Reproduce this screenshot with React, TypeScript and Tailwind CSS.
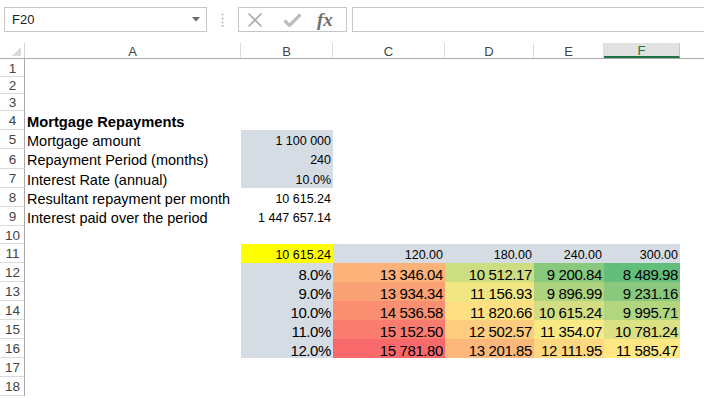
import React from 'react';

const FONT = { fontFamily: '"Liberation Sans", Arial, sans-serif' };

// column widths: A..F, the row header and the rest are separate
const COLS = ['w-[216px]', 'w-[92px]', 'w-[112px]', 'w-[89px]', 'w-[70px]', 'w-[76px]'];
const LETTERS = ['A', 'B', 'C', 'D', 'E', 'F'];

const ROW_H = [
  'h-[18px]', 'h-[17px]', 'h-[17px]', 'h-[19px]', 'h-[19px]', 'h-[20px]',
  'h-[19px]', 'h-[19px]', 'h-[19px]', 'h-[18px]', 'h-[19px]', 'h-[19px]',
  'h-[19px]', 'h-[19px]', 'h-[19px]', 'h-[19px]', 'h-[19px]', 'h-[19px]',
];

const periods = ['120.00', '180.00', '240.00', '300.00'];
const rates = ['8.0%', '9.0%', '10.0%', '11.0%', '12.0%'];
const table: [number, string][][] = [
  [[13346.04, '13 346.04'], [10512.17, '10 512.17'], [9200.84, '9 200.84'], [8489.98, '8 489.98']],
  [[13934.34, '13 934.34'], [11156.93, '11 156.93'], [9896.99, '9 896.99'], [9231.16, '9 231.16']],
  [[14536.58, '14 536.58'], [11820.66, '11 820.66'], [10615.24, '10 615.24'], [9995.71, '9 995.71']],
  [[15152.5, '15 152.50'], [12502.57, '12 502.57'], [11354.07, '11 354.07'], [10781.24, '10 781.24']],
  [[15781.8, '15 781.80'], [13201.85, '13 201.85'], [12111.95, '12 111.95'], [11585.47, '11 585.47']],
];

// 3-colour scale like Excel: green -> yellow -> red
const all = table.flat().map((c) => c[0]).sort((a, b) => a - b);
const lo = all[0];
const hi = all[all.length - 1];
const mid = (all[9] + all[10]) / 2;
const GREEN = [99, 190, 123];
const YELLOW = [255, 235, 132];
const RED = [248, 105, 107];
function scale(v: number) {
  const mix = (a: number[], b: number[], t: number) =>
    a.map((x, i) => Math.round(x + (b[i] - x) * t));
  const c = v <= mid ? mix(GREEN, YELLOW, (v - lo) / (mid - lo)) : mix(YELLOW, RED, (v - mid) / (hi - mid));
  return `rgb(${c[0]},${c[1]},${c[2]})`;
}

type Cell = { text?: string; bold?: boolean; right?: boolean; bg?: string; color?: string; size?: string };

function rowCells(r: number): Cell[] {
  const empty: Cell[] = [{}, {}, {}, {}, {}, {}];
  const blue = 'bg-[#d6dce4]';
  const small = 'text-[12.5px]';
  const big = 'text-[15px] tracking-[-0.4px]';
  switch (r) {
    case 4:
      return [{ text: 'Mortgage Repayments', bold: true }, {}, {}, {}, {}, {}];
    case 5:
      return [{ text: 'Mortgage amount' }, { text: '1 100 000', right: true, bg: blue, size: small }, {}, {}, {}, {}];
    case 6:
      return [{ text: 'Repayment Period (months)' }, { text: '240', right: true, bg: blue, size: small }, {}, {}, {}, {}];
    case 7:
      return [{ text: 'Interest Rate (annual)' }, { text: '10.0%', right: true, bg: blue, size: small }, {}, {}, {}, {}];
    case 8:
      return [{ text: 'Resultant repayment per month' }, { text: '10 615.24', right: true, size: small }, {}, {}, {}, {}];
    case 9:
      return [{ text: 'Interest paid over the period' }, { text: '1 447 657.14', right: true, size: small }, {}, {}, {}, {}];
    case 11:
      return [
        {},
        { text: '10 615.24', right: true, bg: 'bg-[#ffff00]', size: small },
        ...periods.map((p) => ({ text: p, right: true, bg: blue, size: small })),
      ];
    default:
      if (r >= 12 && r <= 16) {
        const i = r - 12;
        return [
          {},
          { text: rates[i], right: true, bg: blue, size: big },
          ...table[i].map(([v, s]) => ({ text: s, right: true, color: scale(v), size: big })),
        ];
      }
      return empty;
  }
}

function TopBar() {
  return (
    <div className="flex h-[43px] items-start pt-[7px] pl-[4px]">
      <div className="flex h-[25px] w-[203px] items-center justify-between border border-[#c6c6c6] pl-[7px] pr-[6px] text-[13px] text-[#222]">
        <span>F20</span>
        <svg width="8" height="5" viewBox="0 0 8 5">
          <path d="M0 0h8L4 4.5z" fill="#6a6a6a" />
        </svg>
      </div>
      <div className="flex w-[31px] justify-center pt-[6px]">
        <svg width="3" height="14" viewBox="0 0 3 14">
          <circle cx="1.5" cy="1.5" r="1" fill="#b5b5b5" />
          <circle cx="1.5" cy="5.5" r="1" fill="#b5b5b5" />
          <circle cx="1.5" cy="9.5" r="1" fill="#b5b5b5" />
          <circle cx="1.5" cy="13" r="1" fill="#b5b5b5" />
        </svg>
      </div>
      <div className="flex h-[25px] w-[109px] items-center border border-[#c6c6c6]">
        <svg className="ml-[8px]" width="16" height="16" viewBox="0 0 16 16">
          <path d="M1.5 1.5l13 13M14.5 1.5l-13 13" stroke="#a8a8a8" strokeWidth="1.6" />
        </svg>
        <svg className="ml-[20px]" width="19" height="14" viewBox="0 0 19 14">
          <path d="M1.5 7.5l5 5L17.5 1.5" stroke="#bdbdbd" strokeWidth="3.2" fill="none" />
        </svg>
        <span
          className="ml-[15px] text-[19px] font-bold italic leading-none text-[#6e6e6e]"
          style={{ fontFamily: '"Liberation Serif", "Times New Roman", serif' }}
        >
          fx
        </span>
      </div>
      <div className="ml-[5px] h-[25px] flex-1 border border-r-0 border-[#c6c6c6]" />
    </div>
  );
}

function HeaderRow() {
  return (
    <div className="flex h-[16px] border-b border-[#ababab] text-[13px] leading-none text-[#444]">
      <div className="relative w-[25px] shrink-0 border-r border-[#d4d4d4]">
        <svg className="absolute right-[3px] bottom-[2px]" width="9" height="9" viewBox="0 0 9 9">
          <path d="M9 0V9H0z" fill="#dadada" />
        </svg>
      </div>
      {LETTERS.map((l, i) =>
        l === 'F' ? (
          <div
            key={l}
            className={`${COLS[i]} flex shrink-0 items-center justify-center border-b-2 border-r border-[#217346] border-r-[#c6c6c6] bg-[#e1e1e1] pt-[1px] text-[#217346]`}
          >
            {l}
          </div>
        ) : (
          <div key={l} className={`${COLS[i]} flex shrink-0 items-center justify-center border-r border-[#dcdcdc] pt-[1px]`}>
            {l}
          </div>
        )
      )}
      <div className="flex-1" />
    </div>
  );
}

export default function App() {
  return (
    <div className="h-[399px] w-[704px] overflow-hidden bg-white text-black" style={FONT}>
      <TopBar />
      <HeaderRow />
      {ROW_H.map((h, idx) => {
        const r = idx + 1;
        const cells = rowCells(r);
        return (
          <div key={r} className={`flex ${h}`}>
            <div className="flex w-[25px] shrink-0 items-center justify-center border-r border-b border-r-[#a8a8a8] border-b-[#dadada] pt-[2px] pl-[1px] text-[13.5px] leading-none text-[#444]">
              {r}
            </div>
            {cells.map((c, i) => (
              <div
                key={i}
                className={`${COLS[i]} flex shrink-0 items-center overflow-visible whitespace-nowrap pt-[3px] leading-none ${c.right ? 'justify-end pr-[2px]' : 'pl-[2px]'} ${c.bg ?? ''} ${c.bold ? 'font-bold text-[14.7px]' : ''} ${c.size ?? 'text-[14.5px]'}`}
                style={c.color ? { backgroundColor: c.color } : undefined}
              >
                {c.text}
              </div>
            ))}
            <div className="flex-1" />
          </div>
        );
      })}
    </div>
  );
}
